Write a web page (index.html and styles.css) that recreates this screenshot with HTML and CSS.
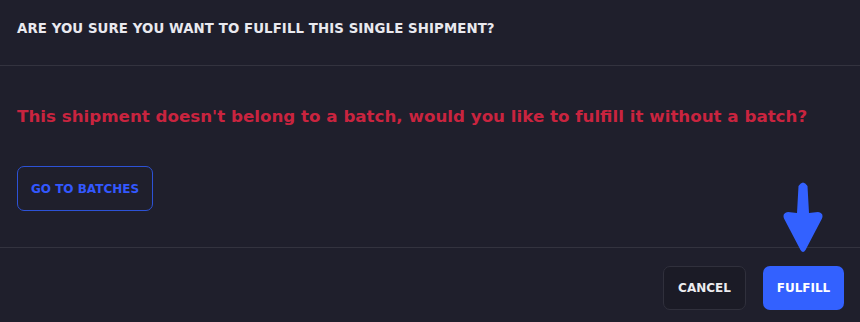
FILE: index.html
```html
<!DOCTYPE html>
<html>
<head>
<meta charset="utf-8">
<link rel="stylesheet" href="styles.css">
</head>
<body>
<div class="modal">
  <div class="header">
    <h2 class="title">ARE YOU SURE YOU WANT TO FULFILL THIS SINGLE SHIPMENT?</h2>
  </div>
  <div class="body">
    <p class="warning">This shipment doesn't belong to a batch, would you like to fulfill it without a batch?</p>
    <button class="btn btn-outline">GO TO BATCHES</button>
  </div>
  <div class="footer">
    <button class="btn btn-cancel">CANCEL</button>
    <button class="btn btn-primary">FULFILL</button>
  </div>
  <svg class="arrow" width="44" height="74" viewBox="0 0 44 74">
    <path d="M17.5 5 Q22 -2 26.5 5 L28 32 L37 31 Q43 32 41 37.5 L24.5 69 Q22 73 19.5 69 L3 37.5 Q1 32 7 31 L16 32 Z" fill="#3361ff"/>
  </svg>
</div>
</body>
</html>
```
FILE: styles.css
```css
html, body {
  margin: 0;
  padding: 0;
  background: #1f1f2c;
}
.modal {
  position: relative;
  width: 860px;
  height: 322px;
  background: #1f1f2c;
  font-family: "DejaVu Sans", sans-serif;
  box-sizing: border-box;
}
.header {
  height: 66px;
  box-sizing: border-box;
  border-bottom: 1px solid #33333f;
  display: flex;
  align-items: center;
  padding: 0 17px 8px;
}
.title {
  margin: 0;
  font-size: 13.3px;
  font-weight: 700;
  color: #e9e9ef;
  letter-spacing: 0.1px;
}
.body {
  height: 182px;
  box-sizing: border-box;
  padding: 39px 17px 0;
  border-bottom: 1px solid #33333f;
}
.warning {
  margin: 0 0 39px;
  font-size: 16.7px;
  font-weight: 700;
  color: #c9243f;
  line-height: 22px;
}
.btn {
  font-family: "DejaVu Sans", sans-serif;
  font-weight: 700;
  font-size: 12px;
  border-radius: 7px;
  box-sizing: border-box;
  cursor: pointer;
}
.btn-outline {
  width: 136px;
  height: 45px;
  background: transparent;
  border: 1.5px solid #2d52d6;
  color: #3358ff;
  padding: 0;
}
.footer {
  display: flex;
  justify-content: flex-end;
  gap: 17px;
  padding: 18px 16px 0;
}
.btn-cancel {
  width: 83px;
  height: 44px;
  background: #1b1b26;
  border: 1px solid #30303c;
  color: #ececf0;
}
.btn-primary {
  width: 81px;
  height: 44px;
  background: #3361ff;
  border: none;
  color: #ffffff;
}
.arrow {
  position: absolute;
  left: 781px;
  top: 181px;
}
```
